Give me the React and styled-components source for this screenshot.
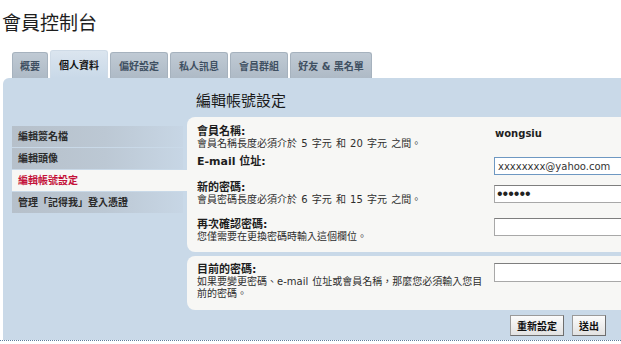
import React from 'react';
import styled, {createGlobalStyle} from 'styled-components';

const GlobalStyle = createGlobalStyle`
  html, body {
    margin: 0;
    padding: 0;
    background: #fff;
    overflow: hidden;
  }
  body {
    font-family: "DejaVu Sans", "Noto Sans CJK TC", sans-serif;
    color: #222;
  }
`;

const tabs = [
    {label: '概要', w: 36},
    {label: '個人資料', w: 58, active: true},
    {label: '偏好設定', w: 58},
    {label: '私人訊息', w: 58},
    {label: '會員群組', w: 58},
    {label: '好友 & 黑名單', w: 82},
];

const menu = [
    {label: '編輯簽名檔'},
    {label: '編輯頭像'},
    {label: '編輯帳號設定', active: true},
    {label: '管理「記得我」登入憑證'},
];

const App = () => {
    return (
        <Page>
            <GlobalStyle/>
            <Title>會員控制台</Title>
            <TabBar>
                {tabs.map(t => <Tab key={t.label} $w={t.w} $active={t.active}>{t.label}</Tab>)}
            </TabBar>
            <Panel>
                <Sidebar>
                    {menu.map(m => <MenuItem key={m.label} $active={m.active}>{m.label}</MenuItem>)}
                </Sidebar>
                <Content>
                    <Heading>編輯帳號設定</Heading>
                    <FormBox $pt={8} $pb={7}>
                        <Row $h={30}>
                            <Left>
                                <Label>會員名稱:</Label>
                                <Desc>會員名稱長度必須介於 5 字元 和 20 字元 之間。</Desc>
                            </Left>
                            <Right $top={2}><Value>wongsiu</Value></Right>
                        </Row>
                        <Row $h={26}>
                            <Left>
                                <Label>E-mail 位址:</Label>
                            </Left>
                            <Right $top={2}><Input $focus defaultValue="xxxxxxxx@yahoo.com"/></Right>
                        </Row>
                        <Row $h={37}>
                            <Left>
                                <Label>新的密碼:</Label>
                                <Desc>會員密碼長度必須介於 6 字元 和 15 字元 之間。</Desc>
                            </Left>
                            <Right $top={4}><Password type="password" defaultValue="123456"/></Right>
                        </Row>
                        <Row $h={27}>
                            <Left>
                                <Label>再次確認密碼:</Label>
                                <Desc>您僅需要在更換密碼時輸入這個欄位。</Desc>
                            </Left>
                            <Right $top={0}><Password type="password"/></Right>
                        </Row>
                    </FormBox>
                    <FormBox $pt={7} $pb={10} $mt={4}>
                        <Row>
                            <Left>
                                <Label>目前的密碼:</Label>
                                <Desc>如果要變更密碼、e-mail 位址或會員名稱，那麼您必須輸入您目<br/>前的密碼。</Desc>
                            </Left>
                            <Right $top={0}><Password type="password" $h={19}/></Right>
                        </Row>
                    </FormBox>
                    <Buttons>
                        <Button>重新設定</Button>
                        <Button>送出</Button>
                    </Buttons>
                </Content>
            </Panel>
            <Dotted/>
        </Page>
    );
};

const Page = styled.div`
  width: 621px;
`;

const Title = styled.h1`
  margin: 0;
  padding: 10px 0 0 2px;
  font-family: "Noto Sans CJK TC", sans-serif;
  font-size: 19px;
  font-weight: 400;
  line-height: 24px;
  color: #1e1e1e;
`;

const TabBar = styled.div`
  display: flex;
  align-items: flex-end;
  gap: 2px;
  margin: 16px 0 0 12px;
  height: 28px;
`;

const Tab = styled.div`
  box-sizing: border-box;
  width: ${p => p.$w}px;
  height: ${p => p.$active ? 28 : 26}px;
  display: flex;
  align-items: center;
  justify-content: center;
  white-space: nowrap;
  font-size: 10px;
  font-weight: bold;
  color: ${p => p.$active ? '#151515' : '#3f5062'};
  background: ${p => p.$active
    ? 'linear-gradient(#dbe5ef, #c9d9e8)'
    : 'linear-gradient(#c0cad4, #aebac6)'};
  border: 1px solid ${p => p.$active ? '#cfdbe7' : '#a6b2be'};
  border-bottom: none;
  border-radius: 3px 3px 0 0;
`;

const Panel = styled.div`
  box-sizing: border-box;
  margin-left: 3px;
  height: 262px;
  display: grid;
  grid-template-columns: 184px 1fr;
  background: #c9d9e8;
  border-top-left-radius: 6px;
  overflow: hidden;
`;

const Sidebar = styled.div`
  display: flex;
  flex-direction: column;
  gap: 1px;
  padding: 48px 0 0 9px;
`;

const MenuItem = styled.div`
  height: 21px;
  line-height: 21px;
  padding-left: 6px;
  margin-right: ${p => p.$active ? 0 : 4}px;
  font-size: 10px;
  font-weight: bold;
  white-space: nowrap;
  color: ${p => p.$active ? '#c4123a' : '#2b2b2b'};
  background: ${p => p.$active
    ? '#f7f7f5'
    : 'linear-gradient(90deg, #b6c0ca 0%, #bcc8d4 55%, #c7d6e5 100%)'};
`;

const Content = styled.div`
  display: flex;
  flex-direction: column;
  padding-top: 12px;
  min-width: 0;
`;

const Heading = styled.h2`
  margin: 0 0 7px;
  padding-left: 9px;
  font-family: "Noto Sans CJK TC", sans-serif;
  font-size: 15px;
  font-weight: 400;
  line-height: 20px;
  color: #1a1a1a;
`;

const FormBox = styled.div`
  margin-top: ${p => p.$mt || 0}px;
  padding: ${p => p.$pt}px 0 ${p => p.$pb}px 10px;
  background: #f7f7f5;
  border-radius: 8px 0 0 8px;
  overflow: hidden;
`;

const Row = styled.div`
  display: flex;
  height: ${p => p.$h ? `${p.$h}px` : 'auto'};
`;

const Left = styled.div`
  width: 297px;
  flex: none;
`;

const Right = styled.div`
  flex: 1;
  padding-top: ${p => p.$top}px;
  white-space: nowrap;
`;

const Label = styled.div`
  font-size: 11px;
  font-weight: bold;
  line-height: 13px;
  color: #1e1e1e;
`;

const Desc = styled.div`
  font-size: 10px;
  line-height: 12px;
  color: #2e2e2e;
  white-space: nowrap;
  word-spacing: 1px;
`;

const Value = styled.div`
  padding-left: 1px;
  font-size: 10px;
  font-weight: bold;
  line-height: 13px;
  color: #1e1e1e;
`;

const Input = styled.input`
  box-sizing: border-box;
  display: block;
  width: 150px;
  height: ${p => p.$h || 18}px;
  margin: 0;
  padding: 0 3px;
  font-family: "DejaVu Sans", sans-serif;
  font-size: 10px;
  color: #333;
  background: #fff;
  border: 1px solid ${p => p.$focus ? '#6e98c2' : '#a8a8a8'};
  border-top-color: ${p => p.$focus ? '#6e98c2' : '#7e7e7e'};
  outline: none;
`;

const Password = styled(Input)`
  font-family: "Liberation Sans", sans-serif;
  font-size: 16px;
  color: #222;
  padding: 0 2px;
`;

const Buttons = styled.div`
  display: flex;
  justify-content: flex-end;
  gap: 8px;
  margin-top: 5px;
  padding-right: 15px;
`;

const Button = styled.button`
  box-sizing: border-box;
  height: 21px;
  padding: 0 6px;
  font-family: "Noto Sans CJK TC", sans-serif;
  font-size: 10px;
  font-weight: bold;
  color: #111;
  background: linear-gradient(#fbfbfb, #e2e2e2);
  border: 1px solid #9a9a9a;
  border-right-color: #6e6e6e;
  border-bottom-color: #6e6e6e;
  border-radius: 0;
`;

const Dotted = styled.div`
  border-top: 1px dotted #5d7c9c;
`;

export default App;
